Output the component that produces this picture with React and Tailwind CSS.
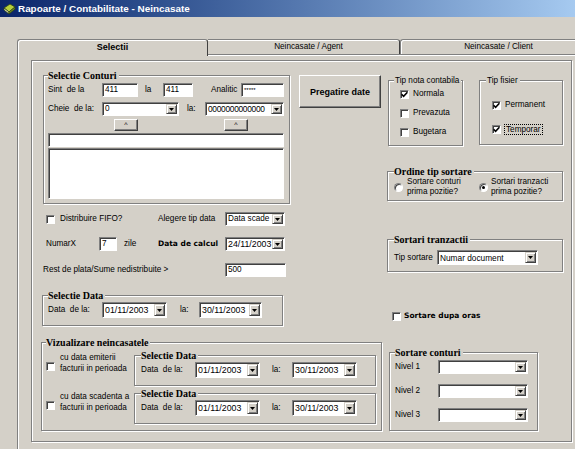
import React from "react";

const legendSerif =
  "font-['Liberation_Serif','Times_New_Roman',serif] font-bold text-[10px] leading-[11px]";
const legendSans = "text-[8.2px] leading-[11px] -ml-[6px] pl-[1px]";
const boldV = "font-['DejaVu_Sans',Verdana,sans-serif] font-bold text-[7.5px]";

const sunken =
  "bg-white border border-t-[#808080] border-l-[#808080] border-b-white border-r-white shadow-[inset_1px_1px_0_#404040]";
const raised =
  "bg-[#d4d0c8] border border-t-white border-l-white border-r-[#404040] border-b-[#404040] shadow-[inset_-1px_-1px_0_#808080]";

function Field({ className = "", children, textClass = "text-[8.2px]" }) {
  return (
    <div
      className={`${sunken} flex items-center pl-[2px] overflow-hidden whitespace-nowrap ${textClass} ${className}`}
    >
      {children}
    </div>
  );
}

function Arrow() {
  return (
    <svg width="5" height="3" viewBox="0 0 5 3">
      <path d="M0 0H5L2.5 3Z" fill="#000" />
    </svg>
  );
}

function Combo({ className = "", text, textClass = "text-[8.2px]" }) {
  return (
    <div className={`${sunken} flex p-[1px] ${className}`}>
      <div
        className={`flex-1 flex items-center pl-[1px] overflow-hidden whitespace-nowrap ${textClass}`}
      >
        {text}
      </div>
      <div className="w-[11px] bg-[#d4d0c8] border border-t-[#d4d0c8] border-l-[#d4d0c8] border-r-[#404040] border-b-[#404040] shadow-[inset_1px_1px_0_#fff,inset_-1px_-1px_0_#808080] flex items-center justify-center">
        <Arrow />
      </div>
    </div>
  );
}

function Check({ checked, className = "" }) {
  return (
    <div
      className={`w-[9px] h-[9px] shrink-0 ${sunken} flex items-center justify-center ${className}`}
    >
      {checked && (
        <svg width="7" height="7" viewBox="0 0 7 7">
          <path
            d="M0.6 3.3 L2.6 5.3 L6.4 1.3"
            stroke="#000"
            strokeWidth="1.6"
            fill="none"
          />
        </svg>
      )}
    </div>
  );
}

function Radio({ checked }) {
  return (
    <div
      className={`w-[9px] h-[9px] shrink-0 rounded-full ${sunken} flex items-center justify-center`}
    >
      {checked && <div className="w-[3px] h-[3px] rounded-full bg-black" />}
    </div>
  );
}

function Group({ title, legendClass = legendSerif, className = "", children }) {
  return (
    <fieldset
      className={`border border-[#808080] shadow-[inset_1px_1px_0_#fff,1px_1px_0_#fff] min-w-0 ${className}`}
    >
      <legend className={`bg-[#d4d0c8] pr-[2px] whitespace-nowrap ${legendClass}`}>{title}</legend>
      {children}
    </fieldset>
  );
}

function DateRow({ labelW = "w-[54px]", first = "w-[65px]", gap = "ml-[13px] w-[19px]", second = "w-[63px]" }) {
  return (
    <div className="flex items-center h-[16px]">
      <span className={`${labelW} whitespace-pre`}>Data  de la:</span>
      <Combo className={`${first} h-[16px]`} text="01/11/2003" textClass="text-[8.8px]" />
      <span className={gap}>la:</span>
      <Combo className={`${second} h-[16px]`} text="30/11/2003" textClass="text-[8.8px]" />
    </div>
  );
}

function TitleIcon() {
  return (
    <svg width="13" height="12" viewBox="0 0 13 12">
      <path d="M1 5 L7 1 L12 4 L6 9 Z" fill="#b5cf3c" stroke="#2d4410" strokeWidth="0.8" />
      <path d="M1 5 L6 9 L6 11 L1 7 Z" fill="#f4f1c8" stroke="#2d4410" strokeWidth="0.8" />
      <path d="M6 9 L12 4 L12 6 L6 11 Z" fill="#7d9a22" stroke="#2d4410" strokeWidth="0.8" />
    </svg>
  );
}

export default function App() {
  return (
    <div className="w-[575px] h-[449px] overflow-hidden bg-[#d4d0c8] text-black font-['Liberation_Sans',Arial,sans-serif] text-[8.2px] leading-[10px]">
      {/* Title bar */}
      <div className="h-[17px] bg-linear-to-r from-[#0a246a] to-[#a6caf0] flex items-center pl-[3px] gap-[2px]">
        <TitleIcon />
        <span className="text-white font-bold text-[9.9px]">
          Rapoarte / Contabilitate - Neincasate
        </span>
      </div>

      <div className="pl-[17px] pt-[22px]">
        {/* Tab strip */}
        <div className="flex h-[15px] w-[600px]">
          <div className="relative z-10 w-[191px] h-[17px] bg-[#d4d0c8] border-t border-l border-r border-t-[#808080] border-l-[#808080] border-r-[#404040] rounded-t-[3px] shadow-[inset_1px_1px_0_#fff] flex items-start justify-center pt-[2px] font-bold text-[9px]">
            Selectii
          </div>
          <div className="w-[192px] h-[15px] border-t border-r border-t-[#808080] border-r-[#404040] rounded-tr-[3px] shadow-[inset_0_1px_0_#fff] flex items-center justify-center pl-[10px]">
            Neincasate / Agent
          </div>
          <div className="w-[196px] h-[15px] border-t border-l border-[#808080] rounded-tl-[3px] shadow-[inset_1px_1px_0_#fff] flex items-center justify-center">
            Neincasate / Client
          </div>
        </div>

        {/* Tab page */}
        <div className="w-[600px] h-[400px] border-t border-l border-[#808080] shadow-[inset_1px_1px_0_#fff] pl-[13px] pt-[5px]">
          {/* Inner panel */}
          <div className="w-[541px] h-[382px] border border-[#808080] shadow-[inset_1px_1px_0_#fff,1px_1px_0_#fff]">
            <div className="flex">
              {/* Left column */}
              <div className="ml-[11px] mt-[9px] w-[247px] flex flex-col">
                <Group title="Selectie Conturi" className="w-[247px] pl-[4px] pr-[5px] pt-[2px] pb-[4px]">
                  <div className="flex items-center h-[14px]">
                    <span className="w-[54px] whitespace-pre">Sint  de la</span>
                    <Field className="w-[36px] h-[14px]">411</Field>
                    <span className="ml-[7px] w-[18px]">la</span>
                    <Field className="w-[30px] h-[14px]">411</Field>
                    <span className="ml-[18px] w-[30px]">Analitic</span>
                    <Field className="w-[43px] h-[14px]" textClass="text-[6px]">
                      *****
                    </Field>
                  </div>
                  <div className="flex items-center h-[14px] mt-[5px]">
                    <span className="w-[54px] whitespace-pre">Cheie  de la:</span>
                    <Combo className="w-[77px] h-[14px]" text="0" />
                    <span className="ml-[8px] w-[18px]">la:</span>
                    <Combo className="w-[79px] h-[14px]" text="0000000000000" textClass="text-[8.4px] tracking-[-0.3px]" />
                  </div>
                  <div className="flex h-[12px] mt-[3px]">
                    <div className={`${raised} ml-[66px] w-[24px] h-[12px] flex items-center justify-center text-[7px]`}>^</div>
                    <div className={`${raised} ml-[86px] w-[24px] h-[12px] flex items-center justify-center text-[7px]`}>^</div>
                  </div>
                  <Field className="w-[236px] h-[14px] mt-[2px]" />
                  <div className={`${sunken} w-[236px] h-[51px] mt-[1px]`} />
                </Group>

                <div className="flex items-center h-[14px] mt-[8px]">
                  <div className="w-[115px] pl-[3px] flex items-center gap-[5px]">
                    <Check />
                    <span>Distribuire FIFO?</span>
                  </div>
                  <span className="w-[67px]">Alegere tip data</span>
                  <Combo className="w-[60px] h-[14px]" text="Data scade" />
                </div>

                <div className="flex items-center h-[14px] mt-[11px]">
                  <span className="w-[56px] pl-[3px]">NumarX</span>
                  <Field className="w-[18px] h-[14px]">7</Field>
                  <span className="ml-[7px] w-[34px]">zile</span>
                  <span className={`w-[67px] ${boldV}`}>Data de calcul</span>
                  <Combo className="w-[60px] h-[14px]" text="24/11/2003" textClass="text-[8.8px]" />
                </div>

                <div className="flex items-center h-[14px] mt-[12px]">
                  <span className="w-[182px]">Rest de plata/Sume nedistribuite &gt;</span>
                  <Field className="w-[61px] h-[14px]">500</Field>
                </div>

                <Group title="Selectie Data" className="-ml-px mt-[13px] w-[241px] pl-[5px] pt-[1px] pb-[7px]">
                  <DateRow />
                </Group>
              </div>

              {/* Right column */}
              <div className="ml-[9px] mt-[14px] flex flex-col">
                <div className="flex items-start">
                  <div className={`${raised} w-[82px] h-[33px] flex items-center justify-center font-bold text-[9px]`}>
                    Pregatire date
                  </div>
                  <Group title="Tip nota contabila" legendClass={legendSans} className="ml-[7px] w-[75px] pl-[11px] pt-[2px] pb-[7px]">
                    <div className="flex items-center h-[12px] gap-[4px]">
                      <Check checked />
                      <span>Normala</span>
                    </div>
                    <div className="flex items-center h-[12px] gap-[4px] mt-[7px]">
                      <Check />
                      <span>Prevazuta</span>
                    </div>
                    <div className="flex items-center h-[12px] gap-[4px] mt-[7px]">
                      <Check />
                      <span>Bugetara</span>
                    </div>
                  </Group>
                  <Group title="Tip fisier" legendClass={legendSans} className="ml-[16px] w-[84px] pl-[12px] pt-[13px] pb-[9px]">
                    <div className="flex items-center h-[12px] gap-[4px]">
                      <Check checked />
                      <span>Permanent</span>
                    </div>
                    <div className="flex items-center h-[12px] gap-[3px] mt-[12px]">
                      <Check checked />
                      <span className="border border-dotted border-black px-[1px] leading-[9px]">Temporar</span>
                    </div>
                  </Group>
                </div>

                <Group title="Ordine tip sortare" className="ml-[88px] mt-[20px] w-[176px] pl-[6px] pb-[3px]">
                  <div className="flex items-center h-[20px]">
                    <div className="w-[85px] flex items-center gap-[4px]">
                      <Radio />
                      <div className="leading-[10px]">
                        Sortare conturi
                        <br />
                        prima pozitie?
                      </div>
                    </div>
                    <div className="flex items-center gap-[3px]">
                      <Radio checked />
                      <div className="leading-[10px]">
                        Sortari tranzacti
                        <br />
                        prima pozitie?
                      </div>
                    </div>
                  </div>
                </Group>

                <Group title="Sortari tranzactii" className="ml-[88px] mt-[33px] w-[176px] pl-[6px] pt-[5px] pb-[6px]">
                  <div className="flex items-center h-[15px]">
                    <span className="w-[43px]">Tip sortare</span>
                    <Combo className="w-[101px] h-[15px]" text="Numar document" textClass="text-[8.3px]" />
                  </div>
                </Group>

                <div className="ml-[93px] mt-[38px] flex items-center h-[12px] gap-[3px]">
                  <Check />
                  <span className={boldV}>Sortare dupa oras</span>
                </div>
              </div>
            </div>

            {/* Bottom section */}
            <div className="flex items-start mt-[11px]">
              <Group title="Vizualizare neincasatele" className="ml-[9px] w-[341px] pl-[4px] pt-[2px] pb-[6px]">
                <div className="flex items-start">
                  <div className="w-[88px] flex items-start">
                    <Check className="mt-[12px]" />
                    <div className="ml-[5px] mt-[2px] leading-[11px]">
                      cu data emiterii
                      <br />
                      facturii in perioada
                    </div>
                  </div>
                  <Group title="Selectie Data" className="w-[242px] pl-[6px] pt-[1px] pb-[7px]">
                    <DateRow first="w-[65px]" gap="ml-[12px] w-[20px]" second="w-[65px]" />
                  </Group>
                </div>
                <div className="flex items-start mt-[2px]">
                  <div className="w-[88px] flex items-start">
                    <Check className="mt-[13px]" />
                    <div className="ml-[5px] mt-[3px] leading-[11px]">
                      cu data scadenta a
                      <br />
                      facturii in perioada
                    </div>
                  </div>
                  <Group title="Selectie Data" className="w-[242px] pl-[6px] pt-[1px] pb-[7px]">
                    <DateRow first="w-[65px]" gap="ml-[12px] w-[20px]" second="w-[65px]" />
                  </Group>
                </div>
              </Group>

              <Group title="Sortare conturi" className="ml-[7px] mt-[10px] w-[149px] pl-[5px] pt-[2px] pb-[8px]">
                <div className="flex items-center h-[14px]">
                  <span className="w-[43px]">Nivel 1</span>
                  <Combo className="w-[90px] h-[14px]" text="" />
                </div>
                <div className="flex items-center h-[14px] mt-[10px]">
                  <span className="w-[43px]">Nivel 2</span>
                  <Combo className="w-[90px] h-[14px]" text="" />
                </div>
                <div className="flex items-center h-[14px] mt-[10px]">
                  <span className="w-[43px]">Nivel 3</span>
                  <Combo className="w-[90px] h-[14px]" text="" />
                </div>
              </Group>
            </div>
          </div>
        </div>
      </div>
    </div>
  );
}
